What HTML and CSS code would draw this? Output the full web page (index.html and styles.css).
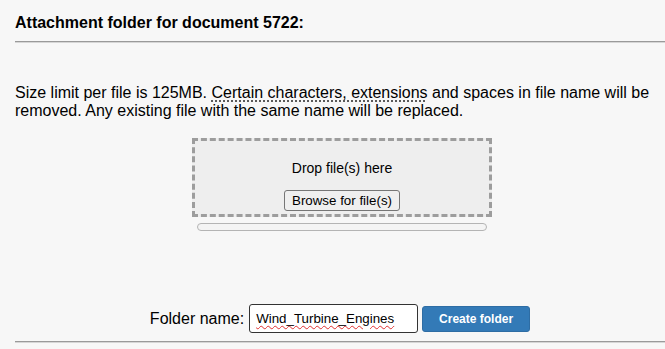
FILE: index.html
```html
<!DOCTYPE html>
<html lang="en">
<head>
<meta charset="utf-8">
<title>Attachment folder</title>
<link rel="stylesheet" href="styles.css">
</head>
<body>
<div class="page">
  <h3 class="title">Attachment folder for document 5722:</h3>
  <hr class="rule">
  <p class="info">Size limit per file is 125MB. <span class="hint">Certain characters, extensions</span> and spaces in file name will be removed. Any existing file with the same name will be replaced.</p>
  <div class="upload">
    <div class="dropzone">
      <div class="drop-label">Drop file(s) here</div>
      <button class="browse" type="button">Browse for file(s)</button>
    </div>
    <div class="progress"></div>
  </div>
  <div class="folder-row">
    <label class="folder-label" id="folder-label">Folder name:</label>
    <div class="folder-input" role="textbox" aria-labelledby="folder-label" contenteditable="true" spellcheck="false"><span class="misspelled">Wind_Turbine_Engines</span></div>
    <button class="create" type="button">Create folder</button>
  </div>
  <hr class="rule rule-bottom">
</div>
</body>
</html>
```
FILE: styles.css
```css
html, body {
  margin: 0;
  padding: 0;
  background: #f7f7f7;
}
body {
  font-family: "Liberation Sans", Arial, sans-serif;
  color: #000;
}
.page {
  padding: 0 0 0 15px;
}
.title {
  margin: 14px 0 0;
  font-size: 16px;
  line-height: 18px;
  font-weight: bold;
}
.rule {
  margin: 9px 0 0;
  height: 0;
  border: 0;
  border-top: 1px solid #9a9a9a;
  border-bottom: 1px solid #d6d6d6;
}
.info {
  margin: 41px 0 0;
  font-size: 16px;
  line-height: 18px;
}
.hint {
  text-decoration: underline dotted #333;
  text-underline-offset: 3px;
}
.upload {
  margin-top: 18px;
  padding-left: 4px;
  display: flex;
  flex-direction: column;
  align-items: center;
}
.dropzone {
  box-sizing: border-box;
  width: 300px;
  height: 79px;
  border: 3px dashed #9d9d9d;
  background: #eeeeee;
  display: flex;
  flex-direction: column;
  align-items: center;
  padding-top: 19px;
}
.drop-label {
  font-size: 14px;
  line-height: 16px;
}
.browse {
  margin-top: 14px;
  box-sizing: border-box;
  height: 21px;
  padding: 0 7px;
  font-family: "Liberation Sans", Arial, sans-serif;
  font-size: 13.33px;
  color: #000;
  background: #efefef;
  border: 1px solid #767676;
  border-radius: 3px;
}
.progress {
  box-sizing: border-box;
  margin-top: 6px;
  width: 290px;
  height: 8px;
  border: 1px solid #b4b4b4;
  border-radius: 4px;
  background: #f4f4f4;
}
.folder-row {
  margin-top: 73px;
  display: flex;
  align-items: center;
  justify-content: center;
}
.folder-label {
  font-size: 16px;
  margin-right: 5px;
}
.folder-input {
  box-sizing: border-box;
  width: 169px;
  height: 29px;
  padding: 0 6px;
  border: 1px solid #333;
  border-radius: 3px;
  background: #fff;
  font-family: "Liberation Sans", Arial, sans-serif;
  font-size: 13.33px;
  line-height: 27px;
  color: #000;
  white-space: nowrap;
  overflow: hidden;
  outline: none;
}
.misspelled {
  text-decoration: underline wavy #e03030;
  text-decoration-thickness: 1px;
  text-underline-offset: 2px;
}
.create {
  margin-left: 4px;
  box-sizing: border-box;
  width: 108px;
  height: 26px;
  padding: 0;
  background: #337ab7;
  border: 1px solid #2e6da4;
  border-radius: 3px;
  color: #fff;
  font-family: "Liberation Sans", Arial, sans-serif;
  font-size: 12px;
  font-weight: bold;
}
.rule-bottom {
  margin-top: 8px;
}
```
